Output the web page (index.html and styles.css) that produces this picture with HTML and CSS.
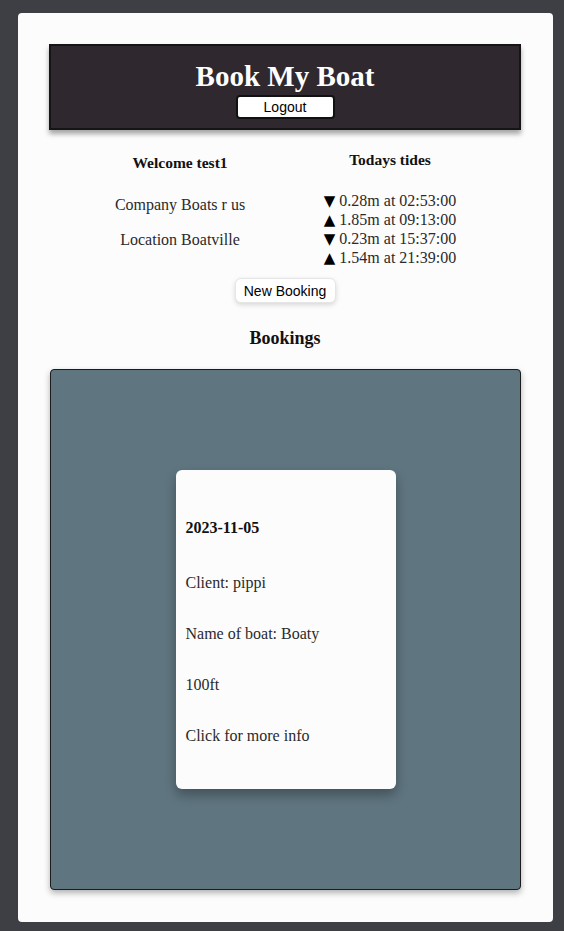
FILE: index.html
```html
<!DOCTYPE html>
<html>
<head>
<meta charset="utf-8">
<link rel="stylesheet" href="styles.css">
</head>
<body>
<div class="page">
  <header class="topbar">
    <h1 class="title">Book My Boat</h1>
    <button class="logout">Logout</button>
  </header>
  <section class="info">
    <div class="col">
      <h4 class="welcome">Welcome test1</h4>
      <p class="line company">Company Boats r us</p>
      <p class="line">Location Boatville</p>
    </div>
    <div class="col">
      <h4 class="tides-title">Todays tides</h4>
      <ul class="tides">
        <li><span class="arrow">▼</span> 0.28m at 02:53:00</li>
        <li><span class="arrow">▲</span> 1.85m at 09:13:00</li>
        <li><span class="arrow">▼</span> 0.23m at 15:37:00</li>
        <li><span class="arrow">▲</span> 1.54m at 21:39:00</li>
      </ul>
    </div>
  </section>
  <div class="actions"><button class="new-booking">New Booking</button></div>
  <h3 class="bookings-title">Bookings</h3>
  <section class="bookings">
    <div class="booking-card">
      <h4 class="date">2023-11-05</h4>
      <p class="field">Client: pippi</p>
      <p class="field">Name of boat: Boaty</p>
      <p class="field">100ft</p>
      <p class="field">Click for more info</p>
    </div>
  </section>
</div>
</body>
</html>
```
FILE: styles.css
```css
html, body {
  margin: 0;
  padding: 0;
  background: #3d3f44;
}
body {
  font-family: "Liberation Serif", "DejaVu Serif", serif;
  color: #222;
}
.page {
  margin: 13px 11px 9px 18px;
  background: #fcfcfc;
  border-radius: 4px;
  padding: 31px 32px 32px 31px;
  height: 846px;
}
.topbar {
  background: #2f292f;
  border: 2px solid #161416;
  height: 82px;
  box-shadow: 0 4px 5px rgba(0,0,0,0.35);
  display: flex;
  flex-direction: column;
  align-items: center;
}
.title {
  margin: 11px 0 0 0;
  color: #fff;
  font-size: 29px;
  line-height: 38px;
  font-weight: bold;
}
.logout {
  margin-top: 0;
  width: 99px;
  height: 24px;
  background: #fff;
  border: 2px solid #111;
  border-radius: 4px;
  font-family: "Liberation Sans", Arial, sans-serif;
  font-size: 14px;
  color: #000;
  padding: 0;
}
.info {
  display: grid;
  grid-template-columns: 210px 210px;
  justify-content: center;
  text-align: center;
}
.welcome {
  margin: 23px 0 0 0;
  font-size: 15.5px;
  line-height: 20px;
  font-weight: bold;
  color: #111;
}
.tides-title {
  margin: 20px 0 0 0;
  font-size: 15.5px;
  line-height: 20px;
  font-weight: bold;
  color: #111;
}
.line {
  margin: 15px 0 0 0;
  font-size: 16px;
  line-height: 20px;
  color: #2a2a2a;
}
.company { margin-top: 22px; }
.tides {
  list-style: none;
  margin: 21px 0 0 0;
  padding: 0;
  font-size: 16px;
  color: #2a2a2a;
}
.tides li {
  height: 19px;
  line-height: 19px;
}
.arrow {
  font-family: "DejaVu Sans", sans-serif;
  font-size: 15px;
  line-height: 1;
  color: #000;
}
.actions {
  display: flex;
  justify-content: center;
  margin-top: 11px;
}
.new-booking {
  width: 101px;
  height: 25px;
  background: #fff;
  border: 1px solid #e6e6e6;
  border-radius: 6px;
  box-shadow: 0 2px 5px rgba(0,0,0,0.15);
  font-family: "Liberation Sans", Arial, sans-serif;
  font-size: 14px;
  color: #000;
  padding: 0;
}
.bookings-title {
  text-align: center;
  margin: 25px 0 0 0;
  font-size: 18px;
  line-height: 20px;
  color: #111;
}
.bookings {
  margin: 21px 0 0 1px;
  height: 519px;
  background: #5f7580;
  border: 1px solid #1c1c1c;
  border-radius: 4px;
  box-shadow: 0 3px 6px rgba(0,0,0,0.3);
  display: flex;
  justify-content: center;
  align-items: flex-start;
}
.booking-card {
  margin-top: 100px;
  width: 200px;
  height: 271px;
  padding: 48px 10px 0 10px;
  background: #fcfcfc;
  border-radius: 6px;
  box-shadow: 0 6px 12px rgba(0,0,0,0.3);
}
.date {
  margin: 0;
  font-size: 16px;
  line-height: 20px;
  font-weight: bold;
  color: #111;
}
.field {
  margin: 35px 0 0 0;
  font-size: 16px;
  line-height: 20px;
  color: #2a2a2a;
}
.date + .field { margin-top: 35px; }
.field + .field { margin-top: 31px; }
```
